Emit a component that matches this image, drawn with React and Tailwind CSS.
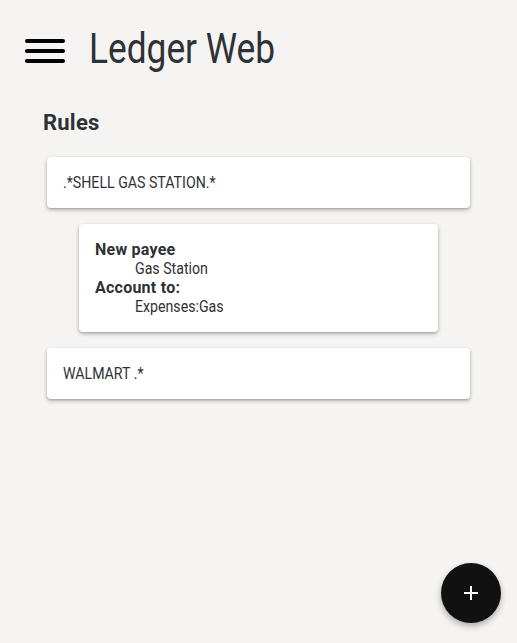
export default function App() {
  return (
    <div className="min-h-screen bg-[#f5f4f2] font-['Roboto',sans-serif] text-[#2e3135]">
      <header className="flex h-[97px] items-center px-[25px]">
        <div className="mt-[5px] flex flex-col gap-[6px]">
          <div className="h-[4px] w-[40px] rounded-full bg-black" />
          <div className="h-[4px] w-[40px] rounded-full bg-black" />
          <div className="h-[4px] w-[40px] rounded-full bg-black" />
        </div>
        <h1 className="ml-[24px] text-[42px] leading-none font-normal">
          <span className="inline-block origin-left scale-x-[0.84] whitespace-nowrap">Ledger Web</span>
        </h1>
      </header>
      <main className="px-[43px] pt-[15px]">
        <h2 className="text-[22px] leading-none font-bold tracking-[0.01em]">Rules</h2>
        <div className="mt-[23px] flex flex-col px-[4px] text-[16px]">
          <div className="flex h-[51px] items-center rounded-[4px] bg-white px-[16px] shadow-[0_2px_4px_rgba(0,0,0,0.25),0_1px_2px_rgba(0,0,0,0.15)]">
            <span className="inline-block origin-left scale-x-[0.885] whitespace-nowrap">.*SHELL GAS STATION.*</span>
          </div>
          <div className="mx-[32px] mt-[16px] rounded-[4px] bg-white px-[16px] py-[16px] leading-[19px] shadow-[0_2px_4px_rgba(0,0,0,0.25),0_1px_2px_rgba(0,0,0,0.15)]">
            <div className="font-bold tracking-[0.015em]">New payee</div>
            <div className="pl-[40px]"><span className="inline-block origin-left scale-x-[0.885] whitespace-nowrap">Gas Station</span></div>
            <div className="font-bold tracking-[0.015em]">Account to:</div>
            <div className="pl-[40px]"><span className="inline-block origin-left scale-x-[0.885] whitespace-nowrap">Expenses:Gas</span></div>
          </div>
          <div className="mt-[16px] flex h-[51px] items-center rounded-[4px] bg-white px-[16px] shadow-[0_2px_4px_rgba(0,0,0,0.25),0_1px_2px_rgba(0,0,0,0.15)]">
            <span className="inline-block origin-left scale-x-[0.885] whitespace-nowrap">WALMART .*</span>
          </div>
        </div>
      </main>
      <button className="fixed right-[16px] bottom-[20px] flex h-[60px] w-[60px] items-center justify-center rounded-full bg-[#111] shadow-[0_3px_6px_rgba(0,0,0,0.3)]">
        <svg width="16" height="16" viewBox="0 0 16 16">
          <path d="M8 1v14M1 8h14" stroke="white" strokeWidth="2" />
        </svg>
      </button>
    </div>
  );
}
